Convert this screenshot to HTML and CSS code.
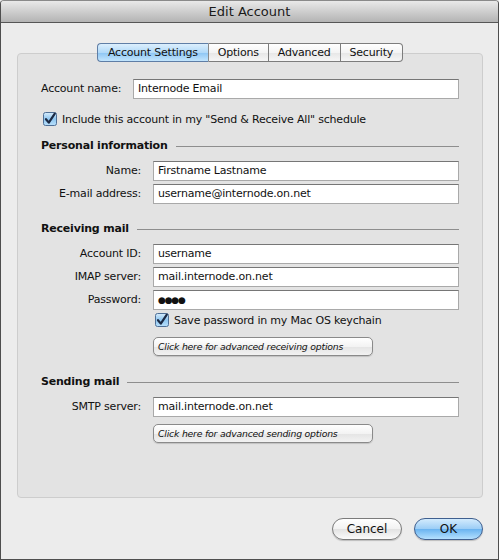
FILE: index.html
```html
<!DOCTYPE html>
<html lang="en">
<head>
    <meta charset="UTF-8">
    <title>Edit Account</title>
    <link rel="stylesheet" href="styles.css">
</head>
<body>
    <div class="window">
        <div class="titlebar">Edit Account</div>

        <div class="content">
            <!-- Tab strip sits over the top edge of the panel -->
            <div class="tabs">
                <span class="tab selected">Account Settings</span>
                <span class="tab">Options</span>
                <span class="tab">Advanced</span>
                <span class="tab">Security</span>
            </div>

            <div class="panel">
                <div class="account-row">
                    <span class="label">Account name:</span>
                    <div class="field">Internode Email</div>
                </div>

                <div class="check-row first-check">
                    <svg class="checkbox" width="14" height="14" viewBox="0 0 14 14">
                        <defs>
                            <linearGradient id="cb1" x1="0" y1="0" x2="0" y2="1">
                                <stop offset="0" stop-color="#d7ecfb"/>
                                <stop offset="0.5" stop-color="#8fc6f0"/>
                                <stop offset="1" stop-color="#b9e0fb"/>
                            </linearGradient>
                        </defs>
                        <rect x="0.5" y="0.5" width="13" height="13" rx="2" fill="url(#cb1)" stroke="#4f6f96"/>
                        <path d="M3 7.2 L5.8 10.6 L11.8 1.6" fill="none" stroke="#1c2a44" stroke-width="2.2" stroke-linecap="round" stroke-linejoin="round"/>
                    </svg>
                    <span>Include this account in my "Send &amp; Receive All" schedule</span>
                </div>

                <div class="section-head personal-head">
                    <span>Personal information</span>
                    <span class="rule"></span>
                </div>

                <div class="form-grid personal-grid">
                    <span class="label">Name:</span>
                    <div class="field">Firstname Lastname</div>
                    <span class="label">E-mail address:</span>
                    <div class="field">username@internode.on.net</div>
                </div>

                <div class="section-head receiving-head">
                    <span>Receiving mail</span>
                    <span class="rule"></span>
                </div>

                <div class="form-grid receiving-grid">
                    <span class="label">Account ID:</span>
                    <div class="field">username</div>
                    <span class="label">IMAP server:</span>
                    <div class="field">mail.internode.on.net</div>
                    <span class="label">Password:</span>
                    <div class="field password">●●●●</div>
                </div>

                <div class="check-row indented">
                    <svg class="checkbox" width="14" height="14" viewBox="0 0 14 14">
                        <defs>
                            <linearGradient id="cb2" x1="0" y1="0" x2="0" y2="1">
                                <stop offset="0" stop-color="#d7ecfb"/>
                                <stop offset="0.5" stop-color="#8fc6f0"/>
                                <stop offset="1" stop-color="#b9e0fb"/>
                            </linearGradient>
                        </defs>
                        <rect x="0.5" y="0.5" width="13" height="13" rx="2" fill="url(#cb2)" stroke="#4f6f96"/>
                        <path d="M3 7.2 L5.8 10.6 L11.8 1.6" fill="none" stroke="#1c2a44" stroke-width="2.2" stroke-linecap="round" stroke-linejoin="round"/>
                    </svg>
                    <span>Save password in my Mac OS keychain</span>
                </div>

                <div class="indented receiving-more">
                    <button class="small-btn">Click here for advanced receiving options</button>
                </div>

                <div class="section-head sending-head">
                    <span>Sending mail</span>
                    <span class="rule"></span>
                </div>

                <div class="form-grid sending-grid">
                    <span class="label">SMTP server:</span>
                    <div class="field">mail.internode.on.net</div>
                </div>

                <div class="indented sending-more">
                    <button class="small-btn">Click here for advanced sending options</button>
                </div>
            </div>

            <div class="actions">
                <button class="btn">Cancel</button>
                <button class="btn default">OK</button>
            </div>
        </div>
    </div>
</body>
</html>
```

FILE: styles.css
```css
* {
    box-sizing: border-box;
}

body {
    margin: 0;
    padding: 0;
    font-family: 'DejaVu Sans', sans-serif;
    font-size: 11px;
    letter-spacing: -0.2px;
    color: #111;
    background-color: #ececec;
}

.window {
    width: 499px;
    height: 560px;
    border: 1px solid #4e4e4e;
    border-top-color: #8a8a8a;
    border-radius: 4px 4px 0 0;
    background-color: #ececec;
    overflow: hidden;
}

.titlebar {
    height: 22px;
    line-height: 22px;
    text-align: center;
    font-size: 13px;
    letter-spacing: 0;
    color: #1a1a1a;
    background: linear-gradient(#e9e9e9, #c9c9c9 60%, #b4b4b4);
    border-bottom: 1px solid #565656;
}

.content {
    padding: 20px 15px 0 16px;
}

/* Segmented tab control */
.tabs {
    position: relative;
    z-index: 1;
    display: flex;
    justify-content: center;
    margin-bottom: -9px;
}

.tab {
    height: 19px;
    line-height: 17px;
    padding: 0 9px;
    font-size: 11px;
    color: #111;
    background: linear-gradient(#ffffff, #f4f4f4 50%, #e6e6e6 51%, #f6f6f6);
    border: 1px solid #7d7d7d;
    border-left: none;
}

.tab:first-child {
    border-left: 1px solid #6a7f9c;
    border-radius: 4px 0 0 4px;
}

.tab:last-child {
    border-radius: 0 4px 4px 0;
}

.tab.selected {
    padding: 0 10px;
    background: linear-gradient(#dceffd, #b1d9f8 50%, #8cc5f3 51%, #c3e5fd);
    border-color: #5f7ea6;
    border-right-color: #8a8a8a;
}

/* Panel */
.panel {
    height: 445px;
    padding: 25px 23px 0 23px;
    background-color: #e3e3e3;
    border: 1px solid #cdcdcd;
    border-radius: 4px;
}

.label {
    font-size: 11px;
    line-height: 20px;
    white-space: nowrap;
    color: #111;
}

.field {
    height: 20px;
    line-height: 18px;
    padding: 0 4px;
    font-size: 11px;
    background-color: #fff;
    border: 1px solid #a9a9a9;
    border-top-color: #767676;
    white-space: nowrap;
    overflow: hidden;
}

.field.password {
    font-size: 9px;
    letter-spacing: -1.2px;
}

.account-row {
    display: grid;
    grid-template-columns: 80px 1fr;
    column-gap: 12px;
}

.check-row {
    display: flex;
    align-items: center;
    gap: 5px;
    height: 14px;
    font-size: 11px;
    white-space: nowrap;
}

.checkbox {
    flex: none;
}

.first-check {
    margin-top: 13px;
    margin-left: 2px;
}

.section-head {
    display: flex;
    align-items: center;
    height: 14px;
    font-weight: bold;
    font-size: 11px;
}

.section-head .rule {
    flex: 1;
    height: 1px;
    margin: 3px 0 0 8px;
    background-color: #8e8e8e;
}

.personal-head {
    margin-top: 12px;
}

.receiving-head {
    margin-top: 17px;
}

.sending-head {
    margin-top: 18px;
}

.form-grid {
    display: grid;
    grid-template-columns: 100px 1fr;
    column-gap: 12px;
    row-gap: 3px;
    margin-top: 9px;
}

.form-grid .label {
    text-align: right;
}

.indented {
    margin-left: 112px;
}

.check-row.indented {
    margin-top: 3px;
    margin-left: 114px;
}

.receiving-more {
    margin-top: 10px;
}

.sending-more {
    margin-top: 7px;
}

.small-btn {
    display: block;
    width: 220px;
    height: 19px;
    padding: 0 4px;
    text-align: left;
    font-family: 'DejaVu Sans', sans-serif;
    font-size: 9.3px;
    font-style: italic;
    letter-spacing: -0.2px;
    color: #111;
    background: linear-gradient(#ffffff, #f3f3f3 50%, #e4e4e4 51%, #f2f2f2);
    border: 1px solid #8a8a8a;
    border-radius: 5px;
    box-shadow: 0 1px 1px rgba(0, 0, 0, 0.15);
}

/* Dialog buttons */
.actions {
    display: flex;
    justify-content: flex-end;
    gap: 12px;
    margin-top: 20px;
}

.btn {
    width: 70px;
    height: 22px;
    font-family: 'DejaVu Sans', sans-serif;
    font-size: 12px;
    color: #111;
    background: linear-gradient(#ffffff, #f2f2f2 50%, #e2e2e2 51%, #fbfbfb);
    border: 1px solid #7b7b7b;
    border-radius: 11px;
    box-shadow: 0 1px 1px rgba(0, 0, 0, 0.2);
}

.btn.default {
    width: 69px;
    background: linear-gradient(#d3ebfd, #9bcdf6 50%, #6ab3f0 51%, #b4e0fe);
    border-color: #3f5f8f;
}
```
